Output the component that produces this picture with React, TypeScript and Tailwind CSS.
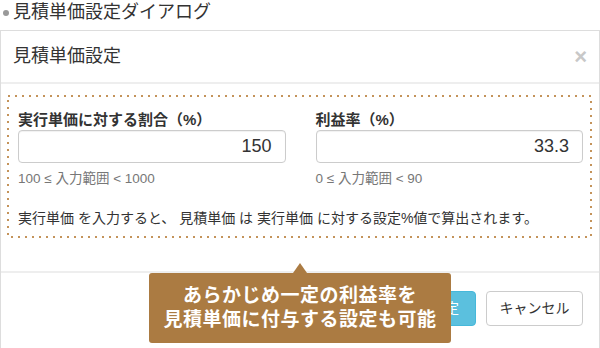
import React from 'react';

const font = "font-['Liberation_Sans','Noto_Sans_CJK_JP',sans-serif]";

const Field: React.FC<{ label: string; value: string; help: string }> = ({ label, value, help }) => (
    <div className="flex flex-col">
        <label className="text-[15px] leading-[18px] font-bold text-[#333]">{label}</label>
        <div className="mt-[1px] h-[33px] rounded-[4px] border border-[#ccc] bg-white flex items-center justify-end px-[13px] text-[18px] text-[#333] shadow-[inset_0_1px_1px_rgba(0,0,0,0.06)]">
            {value}
        </div>
        <p className="mt-[8px] text-[13.5px] leading-[16px] text-[#777]">{help}</p>
    </div>
);

const App: React.FC = () => {
    return (
        <div className={`relative w-[600px] h-[348px] overflow-hidden bg-white ${font}`}>
            <div className="h-[30px] flex items-start pl-[3px] pt-[1px]">
                <span className="mt-[9px] w-[6px] h-[6px] rounded-full bg-[#999]" />
                <h1 className="ml-[4px] text-[18px] leading-[22px] text-[#333]">見積単価設定ダイアログ</h1>
            </div>

            <div className="border border-[#ddd] h-[330px]">
                <div className="h-[53px] flex items-center justify-between pl-[12px] pr-[12px] border-b-2 border-[#eee]">
                    <h2 className="text-[18px] text-[#333]">見積単価設定</h2>
                    <span className="text-[22px] font-bold text-[#c8c8c8] leading-none">×</span>
                </div>

                <div className="pt-[11px] pb-[33px] pl-[6px] pr-[7px] border-b-2 border-[#eee]">
                    <div className="relative h-[143px] pt-[16px] pl-[11px] pr-[9px]">
                        <svg className="absolute inset-[1px] w-[calc(100%-2px)] h-[calc(100%-2px)] overflow-visible pointer-events-none">
                            <rect x="0" y="0" width="100%" height="100%" fill="none" stroke="#c4935a" strokeWidth="2" strokeDasharray="2 5" />
                        </svg>
                        <div className="grid grid-cols-2 gap-[30px]">
                            <Field label="実行単価に対する割合（%）" value="150" help="100 ≤ 入力範囲 < 1000" />
                            <Field label="利益率（%）" value="33.3" help="0 ≤ 入力範囲 < 90" />
                        </div>
                        <p className="mt-[22px] text-[14px] leading-[18px] text-[#333]">
                            実行単価 を入力すると、 見積単価 は 実行単価 に対する設定%値で算出されます。
                        </p>
                    </div>
                </div>

                <div className="flex justify-end gap-[10px] pt-[18px] pr-[16px]">
                    <button className="h-[35px] w-[62px] rounded-[4px] border border-[#46b8da] bg-[#5bc0de] text-white text-[14px]">設定</button>
                    <button className="h-[35px] w-[97px] rounded-[4px] border border-[#ccc] bg-white text-[#333] text-[14px]">キャンセル</button>
                </div>
            </div>

            <div className="absolute left-[149px] top-[273px] w-[302px] h-[70px] rounded-[3px] bg-[#ab7b42] flex flex-col items-center justify-center text-white font-bold text-[19px] tracking-[0.5px] leading-[24px]">
                <span className="absolute -top-[10px] left-[144px] w-0 h-0 border-l-[7px] border-r-[7px] border-b-[10px] border-l-transparent border-r-transparent border-b-[#ab7b42]" />
                <span>あらかじめ一定の利益率を</span>
                <span>見積単価に付与する設定も可能</span>
            </div>
        </div>
    );
};

export default App;
